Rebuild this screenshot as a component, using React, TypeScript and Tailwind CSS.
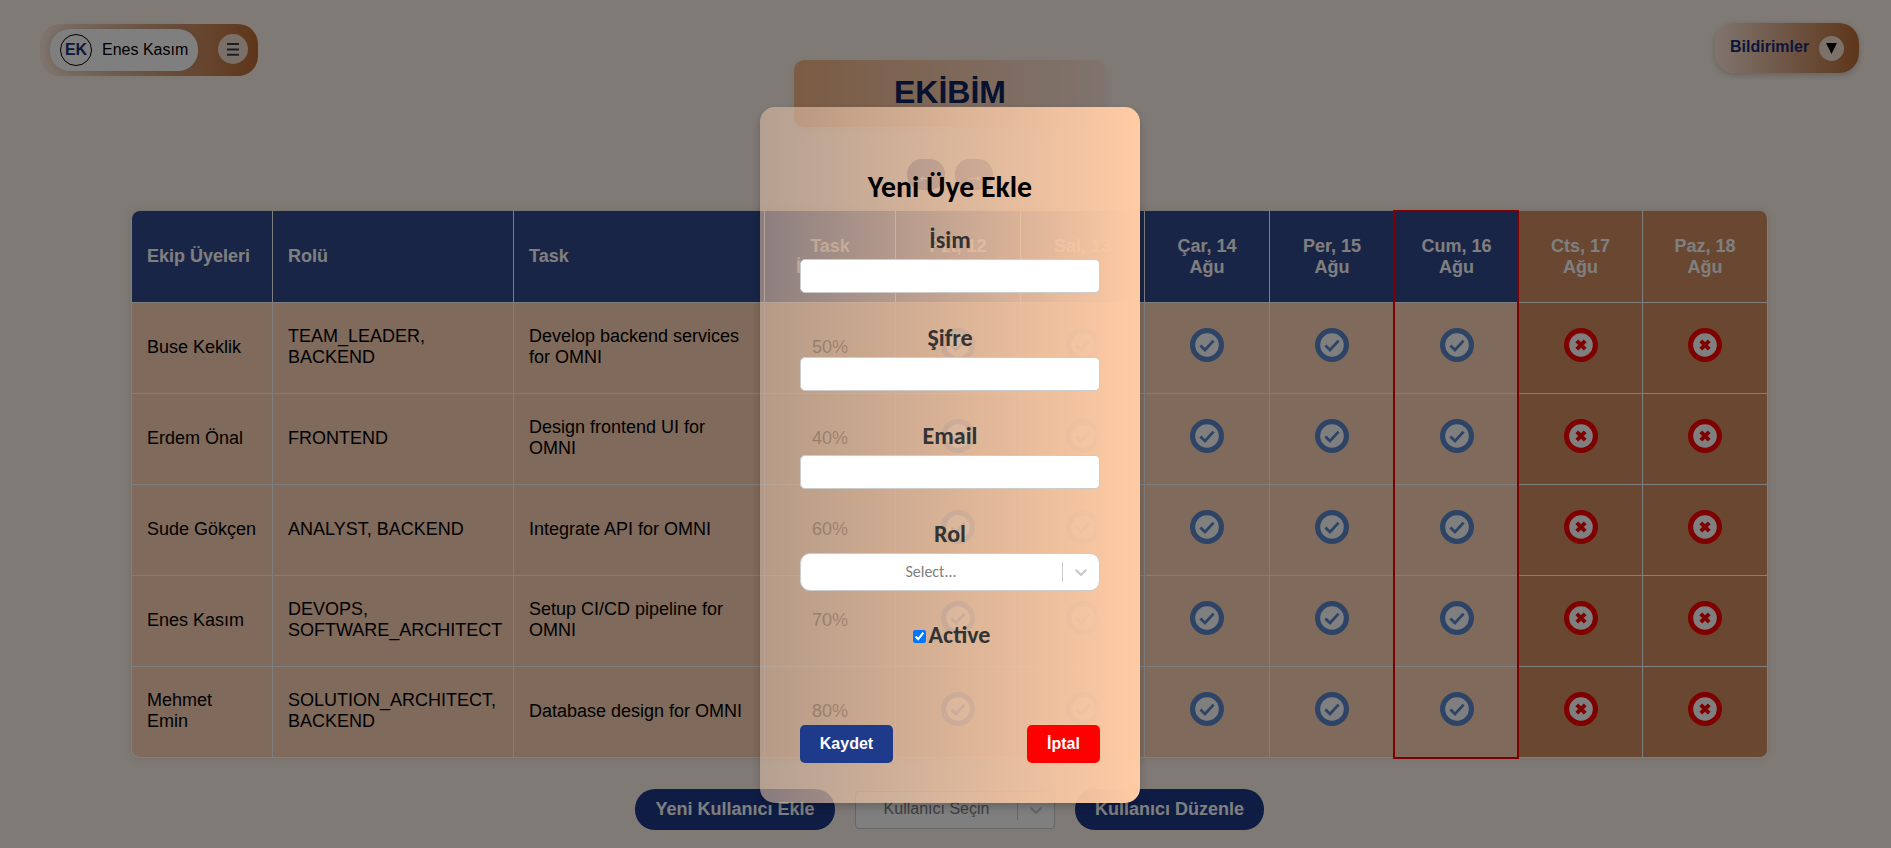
import type { ReactNode } from "react";

type Member = { name: string; role: string; task: string; progress: string };

const members: Member[] = [
  { name: "Buse Keklik", role: "TEAM_LEADER, BACKEND", task: "Develop backend services for OMNI", progress: "50%" },
  { name: "Erdem Önal", role: "FRONTEND", task: "Design frontend UI for OMNI", progress: "40%" },
  { name: "Sude Gökçen", role: "ANALYST, BACKEND", task: "Integrate API for OMNI", progress: "60%" },
  { name: "Enes Kasım", role: "DEVOPS, SOFTWARE_ARCHITECT", task: "Setup CI/CD pipeline for OMNI", progress: "70%" },
  { name: "Mehmet Emin", role: "SOLUTION_ARCHITECT, BACKEND", task: "Database design for OMNI", progress: "80%" },
];

const days = [
  { label: "Pzt, 12", weekend: false, today: false },
  { label: "Sal, 13", weekend: false, today: false },
  { label: "Çar, 14", weekend: false, today: false },
  { label: "Per, 15", weekend: false, today: false },
  { label: "Cum, 16", weekend: false, today: true },
  { label: "Cts, 17", weekend: true, today: false },
  { label: "Paz, 18", weekend: true, today: false },
];

const columns = "grid grid-cols-[141px_241px_251px_131px_125px_124px_125px_125px_124px_124px_125px]";

function CheckIcon() {
  return (
    <svg className="mb-[6px] size-[34px]" viewBox="0 0 34 34" fill="none">
      <circle cx="17" cy="17" r="14.4" fill="#fff" stroke="#5c88cc" strokeWidth="5.2" />
      <path d="M10.4 17.4l4.6 4.6 8.6-9.4" stroke="#5c88cc" strokeWidth="2.8" />
    </svg>
  );
}

function CrossIcon() {
  return (
    <svg className="mb-[6px] size-[34px]" viewBox="0 0 34 34" fill="none">
      <circle cx="17" cy="17" r="14.4" fill="#fff" stroke="#f00" strokeWidth="5.2" />
      <path d="M12.8 12.8l8.4 8.4M21.2 12.8l-8.4 8.4" stroke="#f00" strokeWidth="4" />
    </svg>
  );
}

function Chevron() {
  return (
    <svg className="size-5" viewBox="0 0 20 20" fill="#ccc">
      <path d="M4.516 7.548c0.436-0.446 1.043-0.481 1.576 0l3.908 3.747 3.908-3.747c0.533-0.481 1.141-0.446 1.574 0 0.436 0.445 0.408 1.197 0 1.615-0.406 0.418-4.695 4.502-4.695 4.502-0.217 0.223-0.502 0.335-0.787 0.335s-0.57-0.112-0.789-0.335c0 0-4.287-4.084-4.695-4.502s-0.436-1.17 0-1.615z" />
    </svg>
  );
}

function Field({ label, children }: { label: string; children: ReactNode }) {
  return (
    <div className="h-[98px]">
      <div className="flex h-[33px] items-start justify-center text-2xl leading-[28px] font-bold text-[#333]">{label}</div>
      {children}
    </div>
  );
}

function TopBar() {
  return (
    <header className="grid h-[127px] grid-cols-[794px_312px_1fr] items-start">
      <div className="mt-6 ml-10 flex h-[52px] w-[218px] items-center justify-between rounded-[20px] bg-[linear-gradient(90deg,#ffeade_0%,#bc6c34_100%)] px-[10px]">
        <div className="flex h-[42px] w-[148px] items-center gap-[10px] rounded-[20px] bg-white pl-[10px] shadow-[0_0_10px_rgba(0,0,0,0.12)]">
          <span className="flex size-8 items-center justify-center rounded-full border border-black font-bold text-[#1a3078]">EK</span>
          <span className="whitespace-nowrap">Enes Kasım</span>
        </div>
        <div className="mb-[2px] flex size-[30px] items-center justify-center rounded-full bg-[#f4e0d0]">
          <svg width="12" height="13" viewBox="0 0 12 13" fill="#333f4e">
            <path d="M0 0h12v2H0zM0 5.4h12v2H0zM0 10.8h12v2H0z" />
          </svg>
        </div>
      </div>
      <h1 className="mt-[60px] flex h-[67px] items-center justify-center rounded-[10px] bg-[linear-gradient(90deg,#f8b888_0%,#ffe8dc_100%)] pb-[4px] text-[32px] font-bold text-[#0f2461] shadow-[0_4px_8px_rgba(0,0,0,0.06)]">
        EKİBİM
      </h1>
      <div className="mt-[23px] mr-8 flex h-[50px] w-[144px] items-center gap-[9px] justify-self-end rounded-[20px] bg-[linear-gradient(90deg,#ffeade_0%,#bc6c34_100%)] pl-[15px] shadow-[0_2px_6px_rgba(0,0,0,0.2)]">
        <span className="w-20 pb-[2px] font-bold text-[#162c78]">Bildirimler</span>
        <span className="flex size-[25px] items-center justify-center rounded-full bg-[#f8e4d4]">
          <svg width="11" height="11" viewBox="0 0 11 11">
            <path d="M0 0h11L5.5 11z" />
          </svg>
        </span>
      </div>
    </header>
  );
}

function TeamTable() {
  return (
    <div className="mt-[21px] ml-[131px] w-[1637px] rounded-[8px] border-l border-white text-lg leading-[21px] shadow-[0_0_10px_rgba(0,0,0,0.1)]">
      <div className={`${columns} h-[92px] font-bold text-white`}>
        {["Ekip Üyeleri", "Rolü", "Task"].map((title, i) => (
          <div
            key={title}
            className={`flex items-center border-r border-b border-white bg-[#334a8e] pb-px pl-[15px] ${i === 0 ? "rounded-tl-[8px]" : ""}`}
          >
            {title}
          </div>
        ))}
        <div className="flex items-center justify-center border-r border-b border-white bg-[#334a8e] text-center">
          Task
          <br />
          İlerleme
        </div>
        {days.map((day, i) => (
          <div
            key={day.label}
            className={`relative flex items-center justify-center border-r border-b border-white text-center ${day.weekend ? "bg-[#d48e60]" : "bg-[#334a8e]"} ${i === 6 ? "rounded-tr-[8px]" : ""}`}
          >
            {day.label}
            <br />
            Ağu
            {day.today && <div className="absolute -top-px -left-[2px] z-10 h-[549px] w-[126px] border-2 border-[#f00]" />}
          </div>
        ))}
      </div>
      {members.map((m, row) => (
        <div key={m.name} className={`${columns} h-[91px]`}>
          <div
            className={`flex items-center border-r border-b border-white bg-[#ffd4b6] pr-2 pb-[2px] pl-[15px] ${row === 4 ? "rounded-bl-[8px]" : ""}`}
          >
            <span className={row === 4 ? "w-20" : ""}>{m.name}</span>
          </div>
          <div className="flex items-center border-r border-b border-white bg-[#ffd4b6] pr-2 pb-[2px] pl-[15px]">{m.role}</div>
          <div className="flex items-center border-r border-b border-white bg-[#ffd4b6] pr-4 pb-[2px] pl-[15px]">{m.task}</div>
          <div className="flex items-center justify-center border-r border-b border-white bg-[#ffd4b6] pb-[2px]">{m.progress}</div>
          {days.map((day, i) => (
            <div
              key={day.label}
              className={`flex items-center justify-center border-r border-b border-white ${day.weekend ? "bg-[#d48e60]" : "bg-[#ffd4b6]"} ${row === 4 && i === 6 ? "rounded-br-[8px]" : ""}`}
            >
              {day.weekend ? <CrossIcon /> : <CheckIcon />}
            </div>
          ))}
        </div>
      ))}
    </div>
  );
}

function UserActions() {
  return (
    <div className="mt-[31px] flex items-center justify-center gap-5 pl-[8px]">
      <button className="h-[41px] w-[200px] rounded-[20px] bg-[#1e3a8a] pb-px text-lg font-bold whitespace-nowrap text-white">
        Yeni Kullanıcı Ekle
      </button>
      <div className="flex h-[38px] w-[200px] items-center rounded-[4px] border border-[#ccc] bg-white">
        <span className="flex-1 pb-px text-center text-[#808080]">Kullanıcı Seçin</span>
        <span className="h-5 w-px bg-[#ccc]" />
        <span className="p-2">
          <Chevron />
        </span>
      </div>
      <button className="h-[41px] w-[189px] rounded-[20px] bg-[#1e3a8a] pb-px text-lg font-bold whitespace-nowrap text-white">
        Kullanıcı Düzenle
      </button>
    </div>
  );
}

function AddMemberModal() {
  return (
    <div className="absolute inset-0 z-20 flex items-start justify-center bg-black/50 pt-[107px] pl-[9px]">
      <div className="h-[696px] w-[380px] rounded-[15px] bg-[linear-gradient(90deg,rgba(216,186,164,0.6)_0%,#ffcba4_100%)] px-10 pt-[62px] font-['Carlito','Lato',sans-serif] shadow-[0_4px_8px_rgba(0,0,0,0.2)]">
        <h2 className="h-[57px] text-center text-[29.8px] leading-[37px] font-bold text-black">Yeni Üye Ekle</h2>
        <Field label="İsim">
          <input className="block h-[34px] w-full rounded-[5px] border border-[#ccc] bg-white" />
        </Field>
        <Field label="Şifre">
          <input className="block h-[34px] w-full rounded-[5px] border border-[#ccc] bg-white" />
        </Field>
        <Field label="Email">
          <input className="block h-[34px] w-full rounded-[5px] border border-[#ccc] bg-white" />
        </Field>
        <Field label="Rol">
          <div className="flex h-[38px] items-center rounded-[10px] border border-[#ccc] bg-white">
            <span className="flex-1 pr-px text-center text-base text-[#808080]">Select...</span>
            <span className="h-5 w-px bg-[#ccc]" />
            <span className="p-2">
              <Chevron />
            </span>
          </div>
        </Field>
        <label className="mt-1 flex h-[26px] items-center justify-center gap-[3px] pl-[3px] text-2xl leading-[26px] font-bold text-[#333]">
          <input type="checkbox" defaultChecked className="mt-[2px] size-[13px]" />
          Active
        </label>
        <div className="mt-[77px] flex justify-between font-['Liberation_Sans',Arial,sans-serif] font-bold text-white">
          <button className="h-[38px] w-[93px] rounded-[5px] bg-[#1e3a8a] pb-px">Kaydet</button>
          <button className="h-[38px] w-[73px] rounded-[5px] bg-[#f00] pb-px">İptal</button>
        </div>
      </div>
    </div>
  );
}

export default function App() {
  return (
    <div className="relative h-[848px] w-full overflow-hidden bg-[#fff4ea] font-['Liberation_Sans',Arial,sans-serif] text-base text-black">
      <TopBar />
      <div className="mt-8 flex justify-center gap-[10px] pl-[9px] text-xl leading-none text-white">
        <button className="h-[31px] w-[38px] rounded-[15px] bg-[#1e3a8a]">←</button>
        <button className="h-[31px] w-[38px] rounded-[15px] bg-[#1e3a8a]">→</button>
      </div>
      <TeamTable />
      <UserActions />
      <AddMemberModal />
    </div>
  );
}
